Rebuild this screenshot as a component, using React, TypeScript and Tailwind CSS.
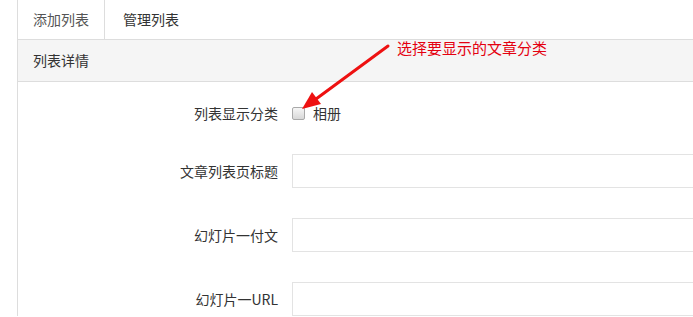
export default function App() {
  return (
    <div className="relative h-[317px] w-[693px] overflow-hidden bg-white font-['Noto_Sans_CJK_SC','Microsoft_YaHei',sans-serif] text-[14px] text-[#333]">
      {/* tabs */}
      <div className="flex h-[39px] pl-[17px]">
        <div className="flex w-[88px] items-center border-x border-[#ddd] bg-white pl-[15px] text-[#555]">添加列表</div>
        <div className="flex items-center pl-[18px] text-[#333]">管理列表</div>
      </div>

      {/* panel */}
      <div className="ml-[17px] border-l border-t border-[#ddd]">
        <div className="flex h-[42px] items-center border-b border-[#ddd] bg-[#f5f5f5] pl-[15px]">列表详情</div>
        <div className="pt-[14px]">
          <div className="flex h-[34px] items-center">
            <label className="w-[260px] shrink-0 text-right">列表显示分类</label>
            <span className="ml-[14px] h-[13px] w-[13px] shrink-0 rounded-[2px] border border-[#a9a9a9] bg-gradient-to-b from-[#f6f6f6] to-[#d8d8d8]" />
            <span className="ml-[8px]">相册</span>
          </div>
          <FieldRow label="文章列表页标题" className="mt-[24px]" />
          <FieldRow label="幻灯片一付文" className="mt-[30px]" />
          <FieldRow label="幻灯片一URL" className="mt-[30px]" />
        </div>
      </div>

      {/* annotation */}
      <span className="absolute left-[397px] top-[38px] text-[15px] leading-[20px] text-[#e4000f]">选择要显示的文章分类</span>
      <svg className="pointer-events-none absolute left-0 top-0" width="693" height="317">
        <line x1="388" y1="46" x2="316" y2="99" stroke="#ee1111" strokeWidth="3" strokeLinecap="round" />
        <polygon points="302,109 321,104 312,92" fill="#ee1111" />
      </svg>
    </div>
  );
}

function FieldRow({ label, className }: { label: string; className: string }) {
  return (
    <div className={`flex h-[34px] items-center ${className}`}>
      <label className="w-[260px] shrink-0 text-right">{label}</label>
      <div className="ml-[14px] h-[34px] w-[430px] shrink-0 border border-[#e3e3e3] bg-white" />
    </div>
  );
}
